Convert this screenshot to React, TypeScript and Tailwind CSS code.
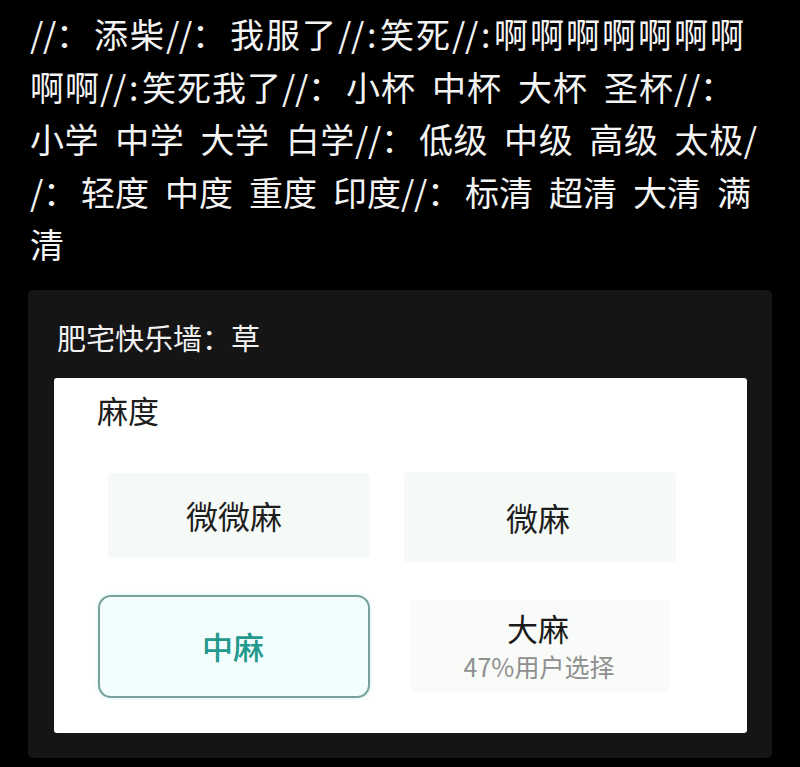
import React from "react";

const FONT = { fontFamily: '"Noto Sans CJK SC", "Noto Sans", sans-serif' };

const lines: { t: string; ls: string }[] = [
  { t: "//：添柴//：我服了//:笑死//:啊啊啊啊啊啊啊", ls: "tracking-[2px]" },
  { t: "啊啊//:笑死我了//：小杯 中杯 大杯 圣杯//：", ls: "tracking-[1px]" },
  { t: "小学 中学 大学 白学//：低级 中级 高级 太极/", ls: "tracking-[0.6px]" },
  { t: "/：轻度 中度 重度 印度//：标清 超清 大清 满", ls: "tracking-[0px]" },
  { t: "清", ls: "tracking-[0px]" },
];

function renderLine(l: string) {
  return Array.from(l).map((c, i) => {
    if (c === "/")
      return (
        <span key={i} className="inline-block w-[13px] text-center tracking-normal">
          /
        </span>
      );
    if (c === ":")
      return (
        <span key={i} className="inline-block w-[16px] pl-[3px] tracking-normal">
          :
        </span>
      );
    if (c === "：")
      return (
        <span key={i} className="inline-block w-[38px] tracking-normal">
          ：
        </span>
      );
    if (c === " ")
      return <span key={i} className="inline-block w-[16px]" />;
    return <span key={i}>{c}</span>;
  });
}

export default function App() {
  return (
    <div className="w-[800px] h-[767px] bg-black overflow-hidden" style={FONT}>
      <div className="pt-[8px] pl-[30px] text-[34px] leading-[52.5px] text-[#f4f4f4]">
        {lines.map((l, i) => (
          <div key={i} className={`whitespace-nowrap ${l.ls}`}>
            {renderLine(l.t)}
          </div>
        ))}
      </div>
      <div className="mt-[19px] ml-[28px] w-[744px] h-[468px] bg-[#151515] rounded-[5px] pt-[28px] pl-[26px] pr-[25px]">
        <div className="ml-[3px] text-[29px] leading-[38px] text-[#f2f2f2]">肥宅快乐墙：草</div>
        <div className="mt-[22px] w-[693px] h-[355px] bg-white rounded-[3px] pt-[11px] pl-[44px] pr-[71px]">
          <div className="ml-[-1px] text-[31px] leading-[42px] text-[#1c1c1c]">麻度</div>
          <div className="mt-[33px] grid grid-cols-2 gap-x-[34px] gap-y-[28px]">
            <div className="h-[103px] flex items-center justify-center">
              <div className="w-[262px] h-[85px] bg-[#f6faf6] flex items-center justify-center rounded-[4px] ml-[10px]">
                <span className="text-[32px] text-[#1e1e1e] -ml-[10px]">微微麻</span>
              </div>
            </div>
            <div className="h-[103px] flex items-center justify-center">
              <div className="w-[274px] h-[90px] bg-[#f6faf6] flex items-center justify-center rounded-[4px] mt-[4px]">
                <span className="text-[32px] text-[#1e1e1e] -ml-[4px]">微麻</span>
              </div>
            </div>
            <div className="h-[103px] rounded-[13px] border-2 border-[#79a09a] bg-[#f2fdfd] flex items-center justify-center shadow-[0_0_4px_rgba(120,220,220,0.35)]">
              <span className="text-[31px] font-medium text-[#22998c] -ml-[2px]">中麻</span>
            </div>
            <div className="h-[103px] flex items-center justify-center">
              <div className="w-[260px] h-[92px] bg-[#f8fbf8] rounded-[4px] flex flex-col items-center justify-center">
                <span className="text-[31px] leading-[32px] text-[#1a1a1a] -ml-[4px]">大麻</span>
                <span className="mt-[8px] text-[25px] leading-[28px] text-[#8f8f8f] -ml-[2px]">47%用户选择</span>
              </div>
            </div>
          </div>
        </div>
      </div>
    </div>
  );
}
